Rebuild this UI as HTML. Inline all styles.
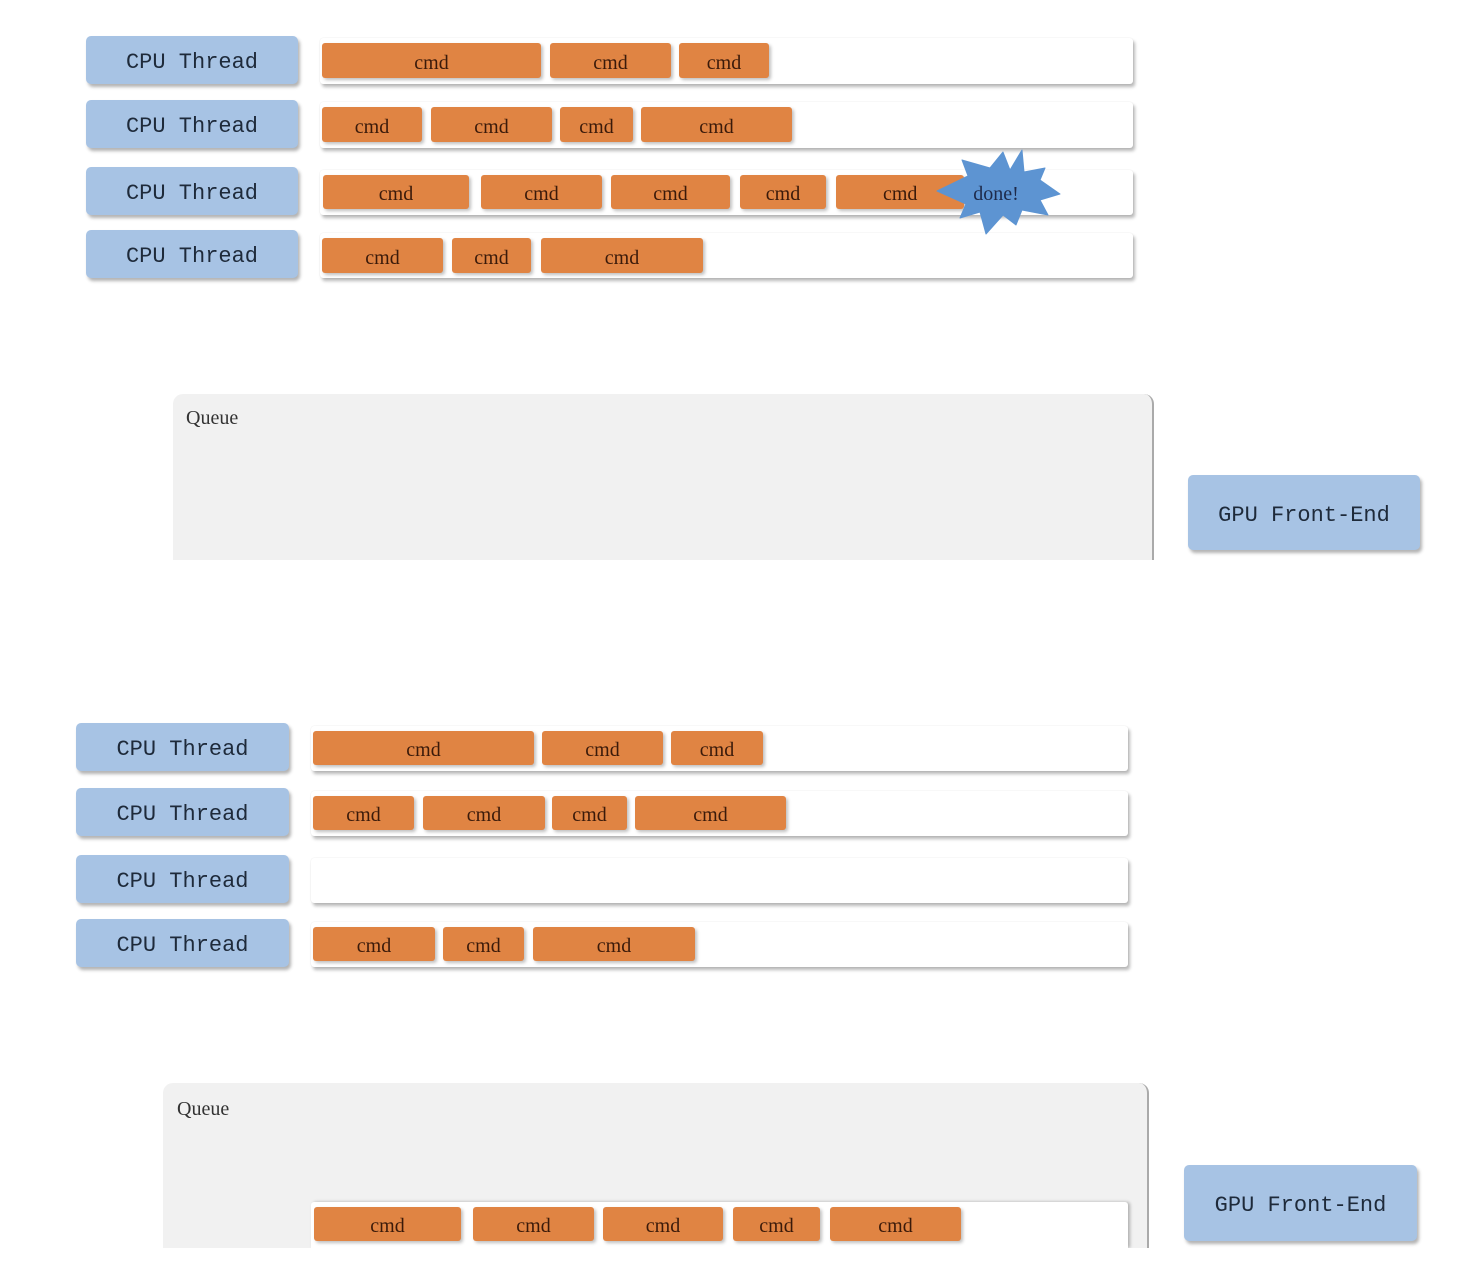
<!DOCTYPE html>
<html><head><meta charset="utf-8"><style>
body{margin:0;width:1472px;height:1278px;background:#fff;position:relative;overflow:hidden;font-family:"Liberation Mono","Noto Serif CJK SC",monospace;}
div{position:absolute;box-sizing:border-box;}
.th{background:#a7c3e4;border-radius:5px;box-shadow:2px 3px 3px rgba(0,0,0,.3);color:#1e2a3a;font-size:22px;display:flex;align-items:center;justify-content:center;font-family:"Liberation Mono",monospace;padding-top:5px;}
.tr{background:#fff;border-radius:3px;box-shadow:2px 3px 3px rgba(0,0,0,.28),0 0 1px rgba(0,0,0,.15);}
.c{background:#e08443;border-radius:3px;box-shadow:2px 2px 3px rgba(0,0,0,.25);color:#3a1a0a;font-size:20px;display:flex;align-items:center;justify-content:center;font-family:"Liberation Serif",serif;padding-top:5px;}
.q{background:#f1f1f1;border-radius:10px 10px 0 0;border-right:2px solid #aaa;}
.ql{font-size:20px;color:#333;font-family:"Liberation Serif",serif;}
</style></head><body>
<!-- set 1 -->
<div class="th" style="left:86px;top:36px;width:212px;height:48px">CPU Thread</div>
<div class="th" style="left:86px;top:100px;width:212px;height:48px">CPU Thread</div>
<div class="th" style="left:86px;top:167px;width:212px;height:48px">CPU Thread</div>
<div class="th" style="left:86px;top:230px;width:212px;height:48px">CPU Thread</div>
<div class="tr" style="left:320px;top:38px;width:813px;height:46px"></div>
<div class="tr" style="left:320px;top:102px;width:813px;height:46px"></div>
<div class="tr" style="left:320px;top:170px;width:813px;height:45px"></div>
<div class="tr" style="left:320px;top:233px;width:813px;height:45px"></div>
<div class="c" style="left:322px;top:43px;width:219px;height:35px">cmd</div>
<div class="c" style="left:550px;top:43px;width:121px;height:35px">cmd</div>
<div class="c" style="left:679px;top:43px;width:90px;height:35px">cmd</div>
<div class="c" style="left:322px;top:107px;width:100px;height:35px">cmd</div>
<div class="c" style="left:431px;top:107px;width:121px;height:35px">cmd</div>
<div class="c" style="left:560px;top:107px;width:73px;height:35px">cmd</div>
<div class="c" style="left:641px;top:107px;width:151px;height:35px">cmd</div>
<div class="c" style="left:323px;top:175px;width:146px;height:34px">cmd</div>
<div class="c" style="left:481px;top:175px;width:121px;height:34px">cmd</div>
<div class="c" style="left:611px;top:175px;width:119px;height:34px">cmd</div>
<div class="c" style="left:740px;top:175px;width:86px;height:34px">cmd</div>
<div class="c" style="left:836px;top:175px;width:128px;height:34px;justify-content:flex-start;padding-left:47px">cmd</div>
<div class="c" style="left:322px;top:238px;width:121px;height:35px">cmd</div>
<div class="c" style="left:452px;top:238px;width:79px;height:35px">cmd</div>
<div class="c" style="left:541px;top:238px;width:162px;height:35px">cmd</div>
<svg style="position:absolute;left:0;top:0" width="1472" height="300"><polygon points="937,191 968,176 962,160 990,168 1003,152 1010,170 1022,150 1024,172 1045,168 1040,180 1060,194 1040,200 1048,215 1022,210 1016,225 1003,215 986,234 980,212 960,218 966,204" fill="#5d94d2" stroke="#5d94d2" stroke-linejoin="round"/><text x="996" y="200" text-anchor="middle" font-family="Liberation Serif,serif" font-size="20" fill="#1e2a4a">done!</text></svg>
<div class="q" style="left:173px;top:394px;width:981px;height:166px"></div>
<div class="ql" style="left:186px;top:407px">Queue</div>
<div class="th" style="left:1188px;top:475px;width:232px;height:75px">GPU Front-End</div>
<!-- set 2 -->
<div class="th" style="left:76px;top:723px;width:213px;height:48px">CPU Thread</div>
<div class="th" style="left:76px;top:788px;width:213px;height:48px">CPU Thread</div>
<div class="th" style="left:76px;top:855px;width:213px;height:48px">CPU Thread</div>
<div class="th" style="left:76px;top:919px;width:213px;height:48px">CPU Thread</div>
<div class="tr" style="left:311px;top:726px;width:817px;height:45px"></div>
<div class="tr" style="left:311px;top:791px;width:817px;height:45px"></div>
<div class="tr" style="left:311px;top:858px;width:817px;height:45px"></div>
<div class="tr" style="left:311px;top:922px;width:817px;height:45px"></div>
<div class="c" style="left:313px;top:731px;width:221px;height:34px">cmd</div>
<div class="c" style="left:542px;top:731px;width:121px;height:34px">cmd</div>
<div class="c" style="left:671px;top:731px;width:92px;height:34px">cmd</div>
<div class="c" style="left:313px;top:796px;width:101px;height:34px">cmd</div>
<div class="c" style="left:423px;top:796px;width:122px;height:34px">cmd</div>
<div class="c" style="left:552px;top:796px;width:75px;height:34px">cmd</div>
<div class="c" style="left:635px;top:796px;width:151px;height:34px">cmd</div>
<div class="c" style="left:313px;top:927px;width:122px;height:34px">cmd</div>
<div class="c" style="left:443px;top:927px;width:81px;height:34px">cmd</div>
<div class="c" style="left:533px;top:927px;width:162px;height:34px">cmd</div>
<div class="q" style="left:163px;top:1083px;width:986px;height:165px"></div>
<div class="ql" style="left:177px;top:1098px">Queue</div>
<div class="tr" style="left:311px;top:1202px;width:817px;height:46px;border-radius:3px 3px 0 0;box-shadow:2px 0 3px rgba(0,0,0,.28)"></div>
<div class="c" style="left:314px;top:1207px;width:147px;height:34px">cmd</div>
<div class="c" style="left:473px;top:1207px;width:121px;height:34px">cmd</div>
<div class="c" style="left:603px;top:1207px;width:120px;height:34px">cmd</div>
<div class="c" style="left:733px;top:1207px;width:87px;height:34px">cmd</div>
<div class="c" style="left:830px;top:1207px;width:131px;height:34px">cmd</div>
<div class="th" style="left:1184px;top:1165px;width:233px;height:76px">GPU Front-End</div>
<div style="left:0;top:1248px;width:1472px;height:30px;background:#fff"></div>
</body></html>
